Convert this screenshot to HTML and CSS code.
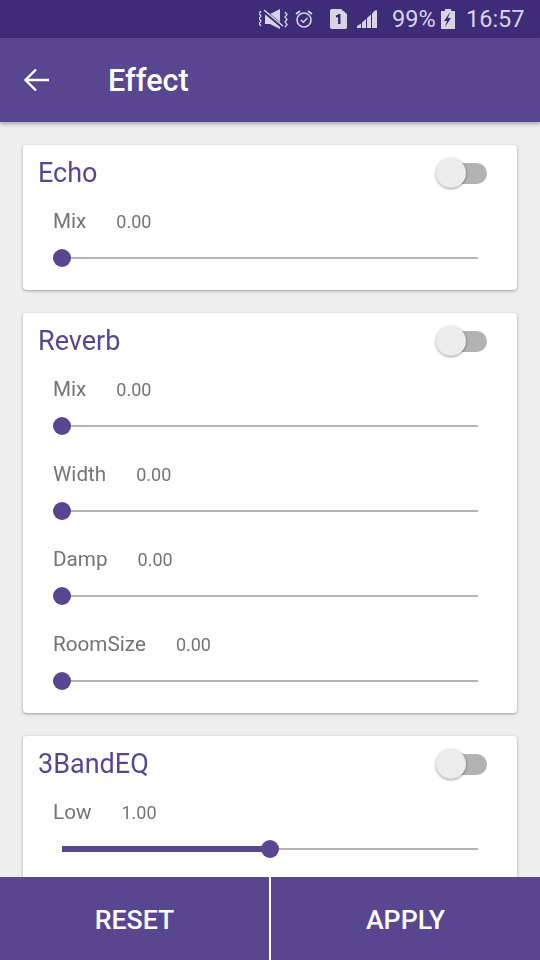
FILE: index.html
```html
<!DOCTYPE html>
<html lang="en">
<head>
<meta charset="utf-8">
<title>Effect</title>
<link rel="stylesheet" href="styles.css">
</head>
<body>
<div class="phone">
  <div class="statusbar">
    <svg class="ic-mute" width="29" height="20" viewBox="0 0 29 20"><path d="M6 5h5l10-5v20l-10-5H6z" fill="#d8d3e6"/><path d="M5 2l19 16" stroke="#3e2c78" stroke-width="3.6"/><path d="M5 1l19 16" stroke="#d8d3e6" stroke-width="1.6"/><path d="M2 2L0 4.500l2 2.500-2 2.500 2 2.500-2 2.500 2 2.500M26 3l2 2.500-2 2.500 2 2.500-2 2.500 2 2.500-2 2.500" fill="none" stroke="#d8d3e6" stroke-width="1.300"/></svg>
    <svg class="ic-alarm" width="20" height="20" viewBox="0 0 20 20"><circle cx="10" cy="11" r="7" fill="none" stroke="#d8d3e6" stroke-width="1.6"/><path d="M7 11l2.3 2.3L13.5 9" fill="none" stroke="#d8d3e6" stroke-width="1.5"/><path d="M2 5l4-3M18 5l-4-3" stroke="#d8d3e6" stroke-width="1.8"/></svg>
    <svg class="ic-sim" width="17" height="20" viewBox="0 0 17 20"><path d="M2 0h9l6 5v13a2 2 0 0 1-2 2H2a2 2 0 0 1-2-2V2a2 2 0 0 1 2-2z" fill="#d8d3e6"/><path d="M6 6.500l3-1.500h1.500v10H8V8l-2 .8z" fill="#3e2c78"/></svg>
    <svg class="ic-signal" width="21" height="20" viewBox="0 0 21 20"><path d="M0 19v-2l4-2.600V19zM5 19v-5.500l4-3.600V19zM10 19V9l4-3.600V19zM15 19V4.500L18 1.500q2-1.500 2 1V19z" fill="#d8d3e6"/></svg>
    <span class="st-pct">99%</span>
    <svg class="ic-batt" width="14" height="20" viewBox="0 0 14 20"><path d="M4 0h6v2h4v18H0V2h4z" fill="#d8d3e6"/><path d="M9 3L3 12h3l-2 6 6-9H7z" fill="#3e2c78"/></svg>
    <span class="st-time">16:57</span>
  </div>
  <header class="appbar">
    <svg class="back" width="26" height="24" viewBox="0 0 26 24"><path d="M1.500 12H25M12 1.500L1.500 12 12 22.500" fill="none" stroke="#fff" stroke-width="2.400"/></svg>
    <h1 class="title">Effect</h1>
  </header>
  <main class="content">
    <section class="card">
      <div class="card-head"><h2 class="card-title">Echo</h2><span class="switch"><span class="knob"></span></span></div>
      <div class="row">
        <div class="labels"><span class="name">Mix</span><span class="val">0.00</span></div>
        <div class="slider"><span class="thumb"></span></div>
      </div>
    </section>
    <section class="card">
      <div class="card-head"><h2 class="card-title">Reverb</h2><span class="switch"><span class="knob"></span></span></div>
      <div class="row">
        <div class="labels"><span class="name">Mix</span><span class="val">0.00</span></div>
        <div class="slider"><span class="thumb"></span></div>
      </div>
      <div class="row">
        <div class="labels"><span class="name">Width</span><span class="val">0.00</span></div>
        <div class="slider"><span class="thumb"></span></div>
      </div>
      <div class="row">
        <div class="labels"><span class="name">Damp</span><span class="val">0.00</span></div>
        <div class="slider"><span class="thumb"></span></div>
      </div>
      <div class="row">
        <div class="labels"><span class="name">RoomSize</span><span class="val">0.00</span></div>
        <div class="slider"><span class="thumb"></span></div>
      </div>
    </section>
    <section class="card">
      <div class="card-head"><h2 class="card-title">3BandEQ</h2><span class="switch"><span class="knob"></span></span></div>
      <div class="row">
        <div class="labels"><span class="name">Low</span><span class="val">1.00</span></div>
        <div class="slider"><span class="fill" style="width:50%"></span><span class="thumb" style="left:50%"></span></div>
      </div>
    </section>
  </main>
  <footer class="actions">
    <button class="btn">RESET</button>
    <button class="btn">APPLY</button>
  </footer>
</div>
</body>
</html>
```
FILE: styles.css
```css
* { box-sizing: border-box; }
html, body { margin: 0; padding: 0; }
body { font-family: Roboto, "Noto Sans", sans-serif; background: #eeeeee; }
.phone { position: relative; width: 540px; height: 960px; overflow: hidden; background: #eeeeee; display: flex; flex-direction: column; }

.statusbar { height: 38px; flex: none; background: #3e2c78; color: #d8d3e6; display: flex; align-items: center; padding-left: 259px; }
.statusbar svg { display: block; flex: none; }
.ic-alarm { margin-left: 6px; }
.ic-sim { margin-left: 16px; }
.ic-signal { margin-left: 10px; }
.st-pct { font-size: 23.500px; margin-left: 14px; width: 49px; }
.ic-batt { margin-left: 0; }
.st-time { font-size: 23.500px; margin-left: 11px; }

.appbar { height: 84px; flex: none; background: #584690; display: flex; align-items: center; padding-left: 24px; box-shadow: 0 2px 4px rgba(0,0,0,.3); position: relative; z-index: 1; }
.back { display: block; }
.title { margin: 0 0 0 58px; color: #fff; font-size: 30.500px; font-weight: 500; }

.content { flex: 1; padding: 23px 23px 0; display: flex; flex-direction: column; gap: 23px; }
.card { flex: none; background: #fff; border-radius: 4px; box-shadow: 0 1px 3px rgba(0,0,0,.35); padding: 0 15px 4px; }
.card-head { height: 56px; display: flex; align-items: center; justify-content: space-between; }
.card-title { margin: 0; color: #584690; font-size: 27px; font-weight: 400; will-change: opacity; }

.switch { position: relative; width: 46px; height: 21px; margin-right: 15px; background: #b2b2b2; border-radius: 11px; }
.knob { position: absolute; left: -5px; top: -5px; width: 30px; height: 30px; border-radius: 50%; background: #ececec; box-shadow: 0 1px 3px rgba(0,0,0,.4); }

.row { height: 85px; padding: 0 24px 0 24px; }
.row:first-of-type { height: 80px; }
.labels { height: 40px; margin-left: -9px; display: flex; align-items: center; gap: 30px; color: #757575; will-change: opacity; }
.name { font-size: 20.700px; }
.val { font-size: 18px; }
.slider { position: relative; height: 2px; margin-top: 16px; background: #b5b5b5; }
.fill { position: absolute; left: 0; top: -2px; height: 6px; background: #584690; }
.thumb { position: absolute; left: 0; top: -8px; width: 18px; height: 18px; margin-left: -9px; border-radius: 50%; background: #584690; }

.actions { position: absolute; left: 0; right: 0; bottom: 0; height: 83px; display: flex; gap: 2px; background: #fff; z-index: 2; }
.btn { flex: 1; border: 0; padding: 2px 0 0; background: #584690; color: #fff; font-family: inherit; font-size: 26.700px; font-weight: 500; }
```
